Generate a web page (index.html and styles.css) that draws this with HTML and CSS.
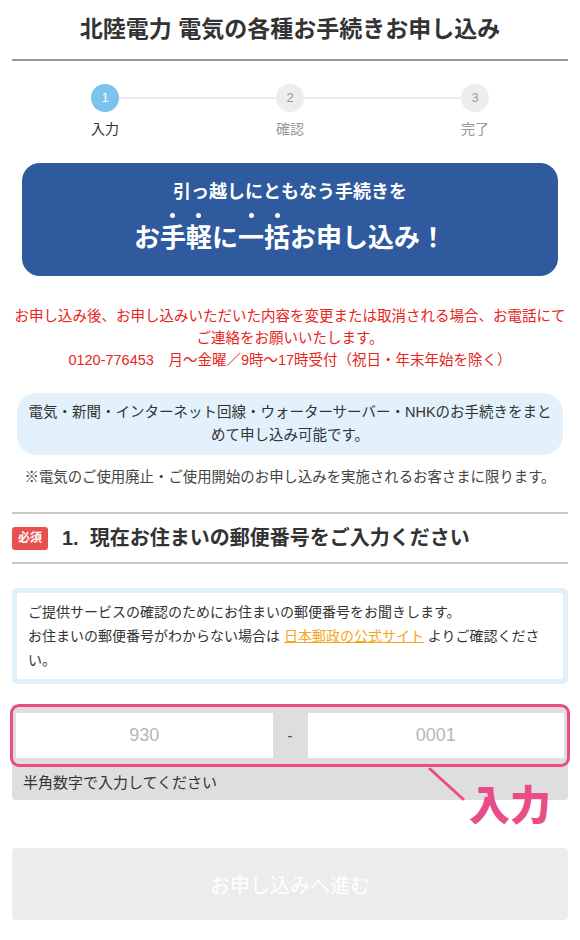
FILE: index.html
```html
<!DOCTYPE html>
<html lang="ja">
<head>
<meta charset="utf-8">
<title>北陸電力 電気の各種お手続きお申し込み</title>
<link rel="stylesheet" href="styles.css">
</head>
<body>
<div class="page">
  <h1 class="title">北陸電力 電気の各種お手続きお申し込み</h1>

  <ol class="stepper">
    <li class="step active"><span class="num">1</span><span class="label">入力</span></li>
    <li class="step"><span class="num">2</span><span class="label">確認</span></li>
    <li class="step"><span class="num">3</span><span class="label">完了</span></li>
  </ol>

  <div class="banner">
    <p class="banner-sub">引っ越しにともなう手続きを</p>
    <p class="banner-main">お<span class="dot">手</span><span class="dot">軽</span>に<span class="dot">一</span><span class="dot">括</span>お申し込み！</p>
  </div>

  <p class="notice">お申し込み後、お申し込みいただいた内容を変更または取消される場合、お電話にてご連絡をお願いいたします。<br>0120-776453　月～金曜／9時～17時受付（祝日・年末年始を除く）</p>

  <p class="services">電気・新聞・インターネット回線・ウォーターサーバー・NHKのお手続きをまとめて申し込み可能です。</p>

  <p class="note">※電気のご使用廃止・ご使用開始のお申し込みを実施されるお客さまに限ります。</p>

  <h2 class="section-head"><span class="badge">必須</span><span>1.&nbsp;&nbsp;現在お住まいの郵便番号をご入力ください</span></h2>

  <div class="info">
    ご提供サービスの確認のためにお住まいの郵便番号をお聞きします。<br>
    お住まいの郵便番号がわからない場合は <a href="#" class="link">日本郵政の公式サイト</a> よりご確認ください。
  </div>

  <div class="zip">
    <div class="zip-row">
      <input class="zip-input" type="text" placeholder="930">
      <span class="zip-dash">-</span>
      <input class="zip-input" type="text" placeholder="0001">
    </div>
    <p class="zip-hint">半角数字で入力してください</p>
    <span class="callout-frame"></span>
    <svg class="callout-line" width="40" height="36" viewBox="0 0 40 36"><path d="M3 2 L36 32" stroke="#e94c87" stroke-width="3" stroke-linecap="round" fill="none"/></svg>
    <span class="callout-text">入力</span>
  </div>

  <button class="submit" type="button">お申し込みへ進む</button>
</div>
</body>
</html>
```

FILE: styles.css
```css
* { box-sizing: border-box; }
html, body { margin: 0; padding: 0; background: #fff; }
body {
  font-family: "Liberation Sans", "Noto Sans CJK JP", sans-serif;
  color: #333;
  width: 580px;
}
p { margin: 0; }
.page { padding: 0 12px; }

.title {
  margin: 0;
  padding: 13px 0 14px;
  font-size: 23px;
  line-height: 32px;
  font-weight: 700;
  text-align: center;
  color: #333;
  border-bottom: 2px solid #999;
}

.stepper {
  list-style: none;
  margin: 23px 63px 0;
  padding: 0;
  display: flex;
  justify-content: space-between;
  position: relative;
}
.stepper::before {
  content: "";
  position: absolute;
  left: 30px;
  right: 30px;
  top: 13px;
  height: 2px;
  background: #ececec;
}
.step {
  width: 60px;
  display: flex;
  flex-direction: column;
  align-items: center;
  position: relative;
}
.num {
  width: 28px;
  height: 28px;
  border-radius: 50%;
  background: #ededed;
  color: #999;
  font-size: 13px;
  line-height: 28px;
  text-align: center;
}
.label {
  margin-top: 8px;
  font-size: 14px;
  line-height: 18px;
  color: #999;
}
.step.active .num { background: #7cc3ec; color: #fff; }
.step.active .label { color: #333; }

.banner {
  margin: 25px 10px 0;
  background: #2f5a9e;
  border-radius: 18px;
  padding: 16px 10px 20px;
  text-align: center;
  color: #fff;
}
.banner-sub {
  font-size: 18px;
  line-height: 26px;
  font-weight: 700;
}
.banner-main {
  margin-top: 15px;
  font-size: 26px;
  line-height: 36px;
  font-weight: 700;
}
.dot {
  position: relative;
}
.dot::before {
  content: "";
  position: absolute;
  left: 50%;
  top: -10px;
  width: 5px;
  height: 5px;
  margin-left: -2.5px;
  border-radius: 50%;
  background: #fff;
}

.notice {
  margin-top: 29px;
  font-size: 14.5px;
  line-height: 22px;
  color: #e8241d;
  text-align: center;
}

.services {
  margin: 22px 5px 0;
  padding: 8px 9px;
  background: #e2f1fb;
  border-radius: 20px;
  font-size: 14.5px;
  line-height: 23px;
  text-align: center;
  color: #333;
}

.note {
  margin-top: 11px;
  font-size: 14.4px;
  line-height: 22px;
  text-align: center;
  color: #444;
}

.section-head {
  margin: 24px 0 0;
  padding: 10px 0;
  border-top: 2px solid #c8c8c8;
  border-bottom: 2px solid #c8c8c8;
  display: flex;
  align-items: center;
  gap: 14px;
  font-size: 20px;
  line-height: 28px;
  font-weight: 700;
  color: #333;
}
.badge {
  width: 36px;
  height: 23px;
  border-radius: 3px;
  background: #e8504f;
  color: #fff;
  font-size: 12px;
  line-height: 23px;
  text-align: center;
  font-weight: 700;
}

.info {
  margin-top: 24px;
  border: 5px solid #e1eff9;
  border-radius: 5px;
  padding: 7px 11px;
  font-size: 14px;
  line-height: 24px;
  color: #333;
}
.link { color: #f5a41c; text-decoration: underline; }

.zip {
  margin-top: 21px;
  background: #dedede;
  border-radius: 4px;
  position: relative;
}
.zip-row {
  display: flex;
  align-items: center;
  padding: 8px 4px;
}
.zip-input {
  flex: 1;
  height: 45px;
  border: 0;
  background: #fff;
  text-align: center;
  font-family: "Liberation Sans", sans-serif;
  font-size: 18px;
  color: #333;
  outline: none;
  padding: 0;
  min-width: 0;
}
.zip-input::placeholder { color: #b6b6b6; }
.zip-dash {
  width: 35px;
  text-align: center;
  font-size: 16px;
  color: #555;
}
.zip-hint {
  padding: 7px 11px;
  font-size: 15px;
  line-height: 20px;
  color: #333;
}
.callout-frame {
  position: absolute;
  left: -2px;
  right: -2px;
  top: -1px;
  height: 63px;
  border: 3px solid #e94c87;
  border-radius: 9px;
}
.callout-line {
  position: absolute;
  left: 415px;
  top: 62px;
}
.callout-text {
  position: absolute;
  left: 457px;
  top: 73px;
  font-size: 41px;
  line-height: 48px;
  font-weight: 900;
  color: #e94c87;
  font-family: "Noto Sans CJK JP", sans-serif;
}

.submit {
  display: block;
  width: 100%;
  margin-top: 48px;
  height: 72px;
  border: 0;
  border-radius: 4px;
  background: #ececec;
  color: #fff;
  font-family: "Liberation Sans", "Noto Sans CJK JP", sans-serif;
  font-size: 20px;
}
```
